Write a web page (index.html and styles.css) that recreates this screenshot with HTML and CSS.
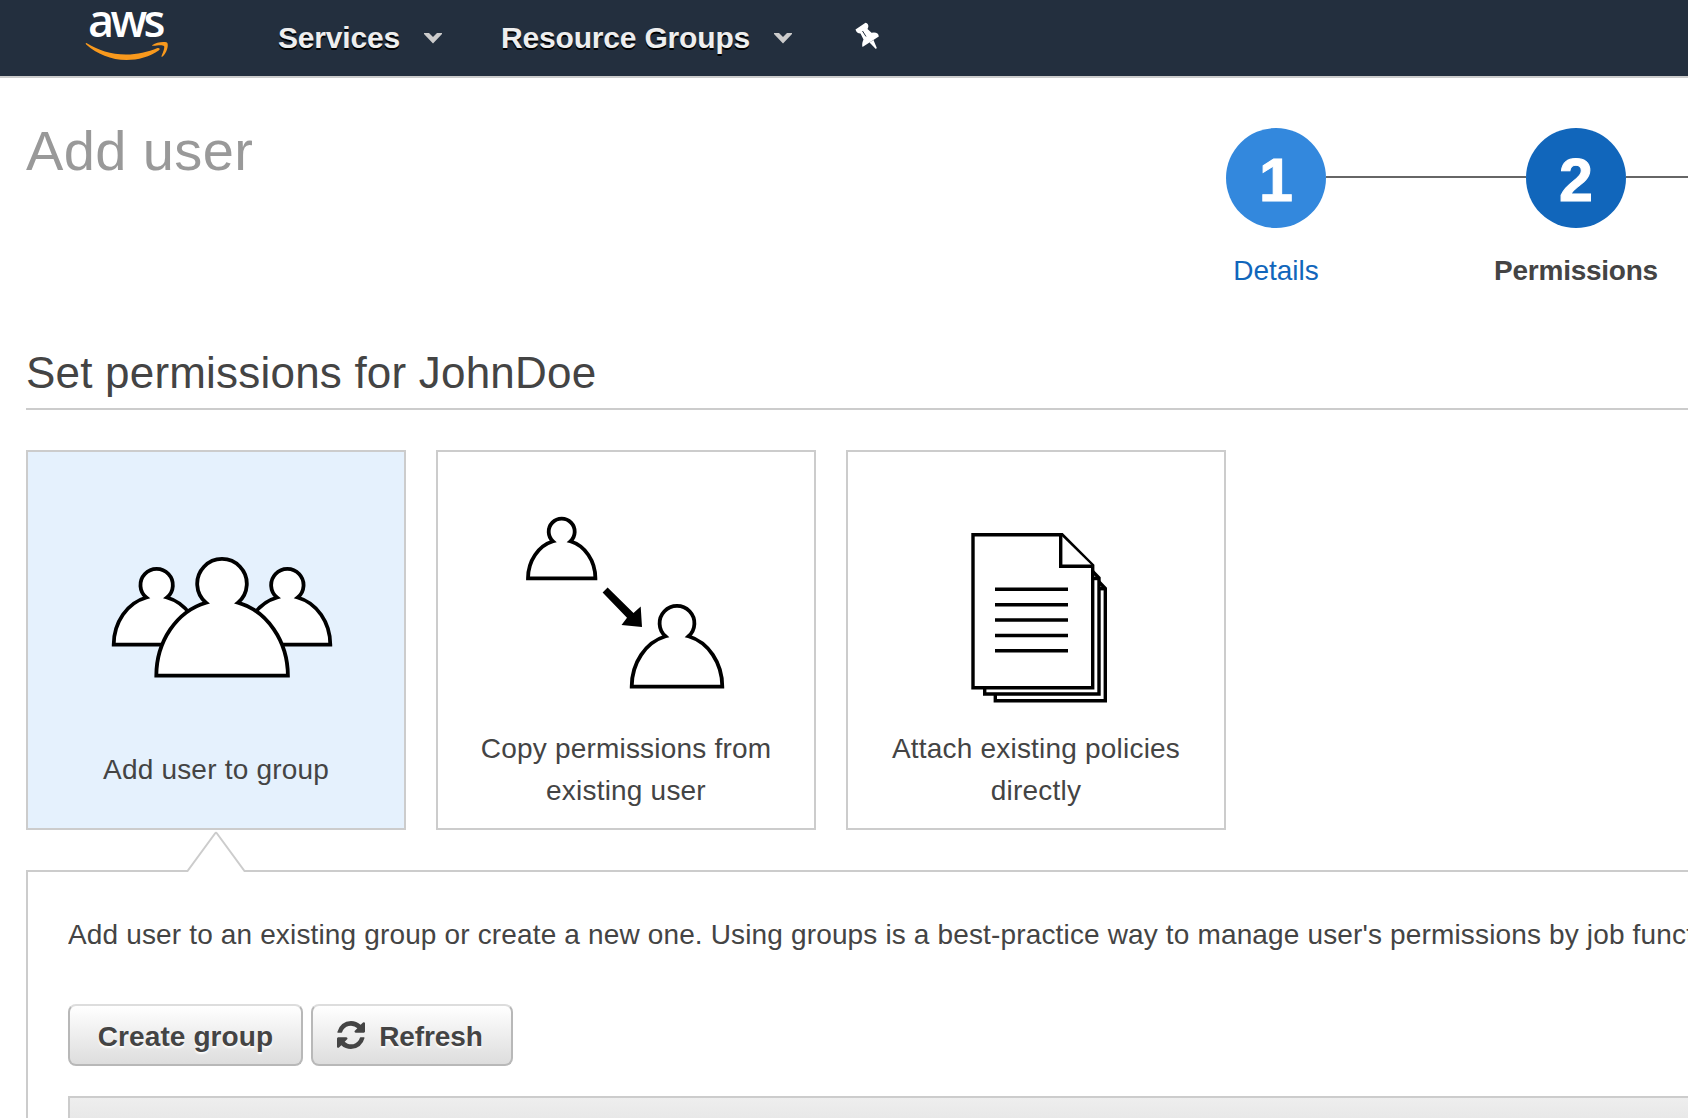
FILE: index.html
```html
<!DOCTYPE html>
<html lang="en">
<head>
<meta charset="utf-8">
<title>Add user</title>
<link rel="stylesheet" href="styles.css">
</head>
<body>
<header class="topbar">
  <a class="logo"><span class="logo-text">aws</span>
    <svg class="smile" viewBox="84 40 86 22" width="86" height="22"><path d="M86.400 43C98 50 111 54.500 126 54.500C137 54.500 148 52 157.500 48C159.500 47.500 160.500 49 159 50.300C150 57 138 60 126.500 60C111 60 97 54 86.200 44.500C85.500 43.500 85.700 42.800 86.400 43Z"/><path d="M152.500 45C156 42.300 163 41.300 167 42.400C169 44.500 167 53 162.300 56.700C161.300 57.200 161.300 56.300 161.700 55.500C163 52.500 165 47.500 164 46C162.500 44.500 157 45.300 153.500 45.700C152 45.900 151.700 45.500 152.500 45Z"/></svg>
  </a>
  <nav class="menu">
    <a class="menu-item services">Services<svg class="caret" viewBox="0 0 18 11" width="18" height="11"><path d="M0 0H5L9 4L13 0H18V1L9 10.500L0 1Z"/></svg></a>
    <a class="menu-item groups">Resource Groups<svg class="caret" viewBox="0 0 18 11" width="18" height="11"><path d="M0 0H5L9 4L13 0H18V1L9 10.500L0 1Z"/></svg></a>
    <svg class="pin" viewBox="854 22 26 28" width="26" height="28"><path fill="#fff" d="M854.500 29.500L864.500 22.700Q867.800 23.500 867.300 27L866.500 29L870.500 32.700Q877.500 31.500 877.800 36.500L861.500 47Q860.500 44 862.500 39.500L859.500 33.500Q855.500 33.500 854.500 29.500Z"/><path fill="#fff" d="M868.500 42.500L872.500 40L875.800 48L874.800 49Z"/><path d="M861.500 31L865 36.500" fill="none" stroke="#232f3e" stroke-width="1"/></svg>
  </nav>
</header>
<main>
  <section class="intro">
    <h1>Add user</h1>
    <ol class="steps">
      <li class="step done"><span class="num">1</span><span class="step-label">Details</span></li>
      <li class="step current"><span class="num">2</span><span class="step-label">Permissions</span></li>
    </ol>
  </section>
  <h2>Set permissions for JohnDoe</h2>
  <div class="cards">
    <div class="card selected">
      <svg class="art" viewBox="28 452 376 260" width="376" height="260">
        <path d="M113.700 644.700A43 48.700 0 0 1 146.300 597.500A16.200 16.200 0 1 1 167 597.500A43 48.700 0 0 1 199.600 644.700Z"/>
        <path d="M244.400 644.700A43 48.700 0 0 1 277 597.500A16.200 16.200 0 1 1 297.700 597.500A43 48.700 0 0 1 330.300 644.700Z"/>
        <path d="M156.300 675.700A65.800 75.600 0 0 1 206 602.700A24.800 24.800 0 1 1 238 602.700A65.800 75.600 0 0 1 287.900 675.700Z"/>
      </svg>
      <p>Add user to group</p>
    </div>
    <div class="card">
      <svg class="art" viewBox="438 452 376 260" width="376" height="260">
        <path d="M528 578.300A33.700 38.400 0 0 1 553 541.300A13 13 0 1 1 570.400 541.300A33.700 38.400 0 0 1 595.400 578.300Z"/>
        <path d="M631.700 686.700A45.300 52.100 0 0 1 665.500 636.300A17.400 17.400 0 1 1 688.500 636.300A45.300 52.100 0 0 1 722.300 686.700Z"/>
        <path class="solid" d="M607.600 587.500L602.600 592.400L627 617.800L621.500 625L642 627L640.700 606.500L633.500 613Z"/>
      </svg>
      <p>Copy permissions from<br>existing user</p>
    </div>
    <div class="card">
      <svg class="art docs" viewBox="848 452 376 260" width="376" height="260">
        <path d="M995.300 560V700.700H1105.300V588.500L1080 562Z"/><path d="M1092 588.700H1105"/>
        <path d="M984.700 550V694H1099V578L1072 550Z"/><path d="M1090 578.500H1099"/>
        <path d="M973 534.700H1062L1092.700 565.500V687.700H973Z"/>
        <path d="M1060.700 535V566.300H1092.700"/>
        <path d="M995 589.300H1068M995 604.700H1068M995 620H1068M995 635.500H1068M995 650.700H1068"/>
      </svg>
      <p>Attach existing policies<br>directly</p>
    </div>
  </div>
  <section class="panel">
    <svg class="pointer" viewBox="0 0 62 42" width="62" height="42"><path fill="#fff" d="M2 39L31 2L60 39V42H2Z"/><path d="M1 40H2.500L30 2.500Q31 1.200 32 2.500L59.500 40H61" fill="none" stroke="#ccc" stroke-width="2"/></svg>
    <p class="hint">Add user to an existing group or create a new one. Using groups is a best-practice way to manage user's permissions by job functions.</p>
    <div class="actions">
      <button class="create">Create group</button>
      <button class="refresh"><svg viewBox="0 0 1536 1536" width="28" height="28"><path d="M1511 928q0 5-1 7-64 268-268 434.500T764 1536q-146 0-282.500-55T238 1324l-129 129q-19 19-45 19t-45-19-19-45V960q0-26 19-45t45-19h448q26 0 45 19t19 45-19 45l-137 137q71 66 161 102t187 36q134 0 250-65t186-179q11-17 53-117 8-23 30-23h192q13 0 22.500 9.500t9.500 22.500zM1536 128v448q0 26-19 45t-45 19h-448q-26 0-45-19t-19-45 19-45l138-138Q969 256 768 256q-134 0-250 65T332 500q-11 17-53 117-8 23-30 23H50q-13 0-22.500-9.500T18 608v-7q65-268 270-434.500T768 0q146 0 284 55.500T1297 212l130-129q19-19 45-19t45 19 19 45z"/></svg><span>Refresh</span></button>
    </div>
    <div class="table-head"></div>
  </section>
</main>
</body>
</html>
```
FILE: styles.css
```css
* { box-sizing: border-box; }
body { margin: 0; width: 1688px; height: 1118px; overflow: hidden; background: #fff; color: #444; font: 28px/42px "Liberation Sans", Arial, sans-serif; }
h1, h2, p, ol { margin: 0; padding: 0; font-weight: normal; }
.topbar { display: flex; height: 78px; padding-left: 84px; background: #232f3e; border-bottom: 2px solid #ccc; }
.logo { display: flex; flex-direction: column; width: 194px; height: 76px; padding-top: 2px; }
.logo-text { height: 38px; padding-left: 4px; color: #fff; font: 600 45px/35px "Open Sans", sans-serif; letter-spacing: -3.6px; }
.smile { display: block; }
.smile path { fill: #f8991d; }
.menu { display: flex; align-items: center; height: 76px; }
.menu-item { display: flex; align-items: center; color: #eee; font-weight: bold; font-size: 30px; letter-spacing: -0.18px; text-shadow: 0 2px 0 #000; white-space: nowrap; }
.caret { margin-left: 24px; fill: #ccc; }
.groups { margin-left: 59px; }
.pin { margin: -4px 0 0 63px; }
main { padding-left: 26px; }
.intro { display: flex; justify-content: space-between; height: 256px; }
h1 { padding-top: 40px; color: #999; font-size: 56px; line-height: 66px; letter-spacing: 0.4px; }
.steps { display: flex; width: 562px; padding-top: 50px; overflow: hidden; list-style: none; }
.step { position: relative; display: flex; flex: 0 0 300px; flex-direction: column; align-items: center; }
.step::after { content: ""; position: absolute; left: 200px; top: 48px; width: 200px; height: 2px; background: #666; }
.num { width: 100px; height: 100px; border-radius: 50%; background: #38d; color: #fff; font-weight: bold; font-size: 61px; line-height: 104px; text-align: center; -webkit-text-stroke: 1px #fff; }
.step-label { margin-top: 22px; }
.done .step-label { color: #16b; }
.current .num { background: #16b; }
.current .step-label { font-weight: bold; letter-spacing: -0.25px; }
h2 { height: 76px; border-bottom: 2px solid #ccc; font-size: 44px; line-height: 78px; letter-spacing: 0.2px; }
.cards { display: flex; gap: 30px; margin-top: 40px; }
.card { display: flex; flex-direction: column; width: 380px; height: 380px; border: 2px solid #ccc; text-align: center; }
.selected { background: #e5f1fd; }
.art { display: block; fill: #fff; stroke: #000; stroke-width: 3.8; }
.docs { stroke-width: 3.4; }
.solid { fill: #000; stroke: none; }
.card p { display: flex; flex: 1; align-items: center; justify-content: center; letter-spacing: 0.2px; }
.panel { position: relative; height: 248px; margin-top: 40px; padding: 42px 0 0 40px; border: solid #ccc; border-width: 2px 0 0 2px; }
.pointer { position: absolute; left: 157px; top: -41px; }
.hint { height: 90px; overflow: hidden; white-space: nowrap; letter-spacing: 0.15px; }
.actions { display: flex; gap: 8px; }
button { display: flex; align-items: center; justify-content: center; height: 62px; padding: 3px 0 0; border: 2px solid #b8b8b8; border-top-color: #ddd; border-radius: 8px; background: linear-gradient(#fff, #ddd); color: #444; font: bold 28px/42px "Liberation Sans", Arial, sans-serif; text-shadow: 0 2px 2px #fff; }
.create { width: 235px; letter-spacing: 0.1px; }
.refresh { width: 202px; gap: 14px; padding-right: 4px; letter-spacing: -0.1px; }
.refresh svg { margin-top: -3px; fill: #444; }
.table-head { height: 60px; margin-top: 30px; border: solid #ccc; border-width: 2px 0 0 2px; background: linear-gradient(#eee, #ddd); }
```
